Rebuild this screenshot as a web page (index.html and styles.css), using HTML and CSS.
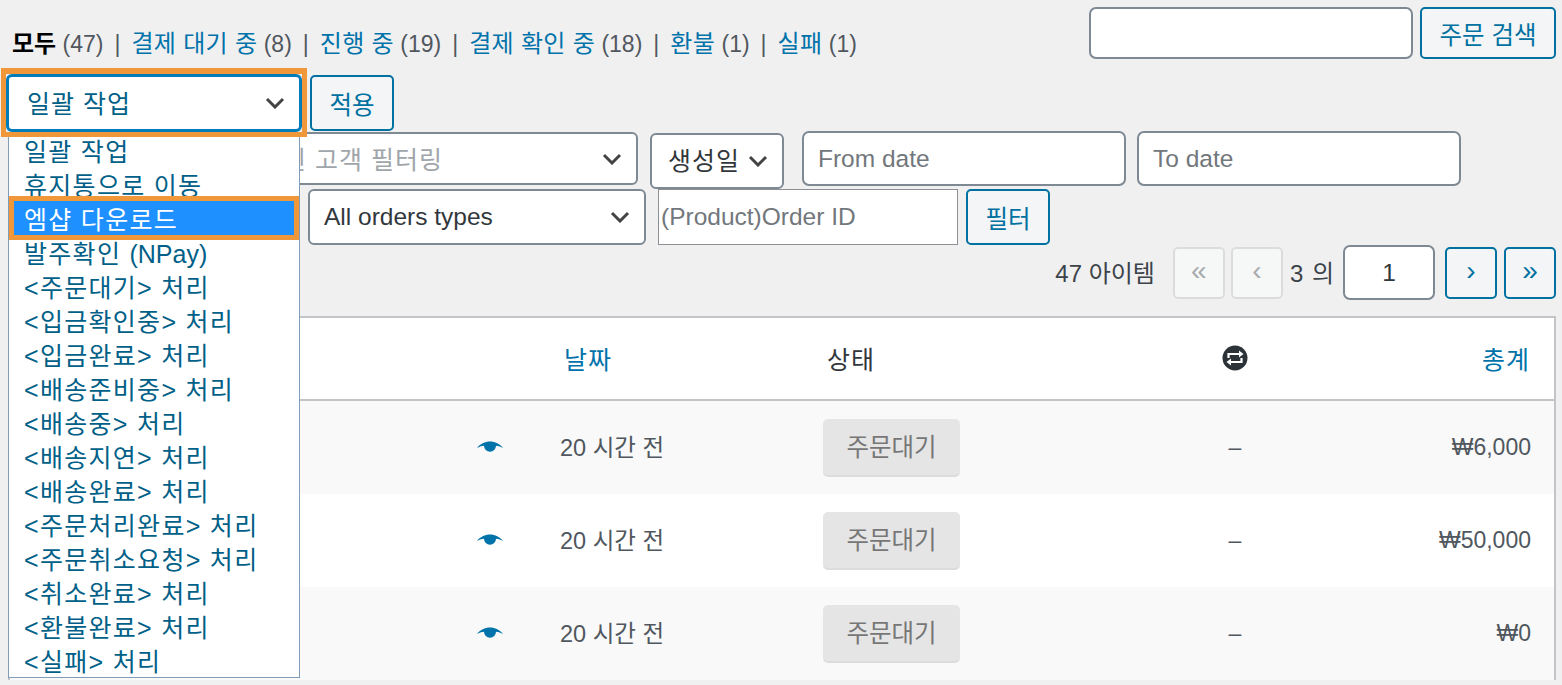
FILE: index.html
```html
<!DOCTYPE html>
<html lang="ko">
<head>
  <meta charset="UTF-8">
  <title>주문</title>
  <link rel="stylesheet" href="styles.css">
</head>
<body>
  <div class="top-row">
    <ul class="status-links">
      <li><b>모두</b> <span class="count">(47)</span><i>|</i></li>
      <li><a href="#">결제 대기 중</a> <span class="count">(8)</span><i>|</i></li>
      <li><a href="#">진행 중</a> <span class="count">(19)</span><i>|</i></li>
      <li><a href="#">결제 확인 중</a> <span class="count">(18)</span><i>|</i></li>
      <li><a href="#">환불</a> <span class="count">(1)</span><i>|</i></li>
      <li><a href="#">실패</a> <span class="count">(1)</span></li>
    </ul>
    <div class="search-box">
      <input class="field search-input" type="text">
      <button class="btn search-btn">주문 검색</button>
    </div>
  </div>

  <div class="bulk-row">
    <div class="bulk-wrap">
      <select class="select bulk-select"><option>일괄 작업</option></select>
      <ul class="bulk-menu">
        <li>일괄 작업</li>
        <li>휴지통으로 이동</li>
        <li class="active">엠샵 다운로드</li>
        <li>발주확인 <span class="latin">(NPay)</span></li>
        <li>&lt;주문대기&gt; 처리</li>
        <li>&lt;입금확인중&gt; 처리</li>
        <li>&lt;입금완료&gt; 처리</li>
        <li>&lt;배송준비중&gt; 처리</li>
        <li>&lt;배송중&gt; 처리</li>
        <li>&lt;배송지연&gt; 처리</li>
        <li>&lt;배송완료&gt; 처리</li>
        <li>&lt;주문처리완료&gt; 처리</li>
        <li>&lt;주문취소요청&gt; 처리</li>
        <li>&lt;취소완료&gt; 처리</li>
        <li>&lt;환불완료&gt; 처리</li>
        <li>&lt;실패&gt; 처리</li>
      </ul>
    </div>
    <button class="btn apply-btn">적용</button>
  </div>

  <div class="filter-row">
    <div class="select customer-select">등록된 고객 필터링</div>
    <select class="select date-select"><option>생성일</option></select>
    <input class="field date-input" type="text" placeholder="From date">
    <input class="field date-input" type="text" placeholder="To date">
  </div>

  <div class="filter-row second">
    <select class="select type-select"><option>All orders types</option></select>
    <input class="order-input" type="text" placeholder="(Product)Order ID">
    <button class="btn filter-btn">필터</button>
  </div>

  <div class="pager">
    <span class="pager-count">47 아이템</span>
    <span class="page-btn off">«</span>
    <span class="page-btn off second-off">‹</span>
    <span class="pager-total">3 의</span>
    <input class="field page-input" type="text" value="1">
    <a class="page-btn" href="#">›</a>
    <a class="page-btn last" href="#">»</a>
  </div>

  <table class="orders">
    <colgroup>
      <col class="col-order"><col class="col-date"><col class="col-status"><col class="col-sync"><col class="col-total">
    </colgroup>
    <thead>
      <tr>
        <th></th>
        <th><a href="#">날짜</a></th>
        <th>상태</th>
        <th class="center">
          <svg class="sync-icon" viewBox="0 0 26 26" width="26" height="26">
            <circle cx="13" cy="13" r="12.5" fill="#2c3338"/>
            <path d="M6.500 13V9H18M19.500 13v4H8" fill="none" stroke="#fff" stroke-width="2.200"/>
            <path d="M17 5.500 21.500 9 17 12.500ZM9 13.500 4.500 17 9 20.500Z" fill="#fff"/>
          </svg>
        </th>
        <th class="right"><a href="#">총계</a></th>
      </tr>
    </thead>
    <tbody>
      <tr>
        <td class="right eye-cell"><svg class="eye" viewBox="0 0 26 14" width="26" height="14"><path d="M0 7C3 3 8 .5 13 .5S23 3 26 7C23 5.500 21 5 19 4.800A6 6 0 1 1 7 4.800C5 5 3 5.500 0 7Z" fill="#0073aa"/></svg></td>
        <td class="date">20 시간 전</td>
        <td><span class="pill">주문대기</span></td>
        <td class="center dash">–</td>
        <td class="right amount">₩6,000</td>
      </tr>
      <tr>
        <td class="right eye-cell"><svg class="eye" viewBox="0 0 26 14" width="26" height="14"><path d="M0 7C3 3 8 .5 13 .5S23 3 26 7C23 5.500 21 5 19 4.800A6 6 0 1 1 7 4.800C5 5 3 5.500 0 7Z" fill="#0073aa"/></svg></td>
        <td class="date">20 시간 전</td>
        <td><span class="pill">주문대기</span></td>
        <td class="center dash">–</td>
        <td class="right amount">₩50,000</td>
      </tr>
      <tr>
        <td class="right eye-cell"><svg class="eye" viewBox="0 0 26 14" width="26" height="14"><path d="M0 7C3 3 8 .5 13 .5S23 3 26 7C23 5.500 21 5 19 4.800A6 6 0 1 1 7 4.800C5 5 3 5.500 0 7Z" fill="#0073aa"/></svg></td>
        <td class="date">20 시간 전</td>
        <td><span class="pill">주문대기</span></td>
        <td class="center dash">–</td>
        <td class="right amount">₩0</td>
      </tr>
    </tbody>
  </table>
</body>
</html>
```

FILE: styles.css
```css
* {
  box-sizing: border-box;
}

html, body {
  height: 685px;
  overflow: hidden;
}

body {
  margin: 0;
  padding: 7px 6px 0 8px;
  background: #f0f0f1;
  color: #3c434a;
  font-family: "Liberation Sans", "Noto Sans CJK KR", sans-serif;
  font-size: 23px;
}

a {
  color: #0073aa;
  text-decoration: none;
}

button, input, select {
  font-family: inherit;
  font-size: 24.5px;
}

/* top row */
.top-row {
  display: flex;
  justify-content: space-between;
  height: 52px;
}

.status-links {
  display: flex;
  list-style: none;
  margin: 22px 0 0 4px;
  padding: 0;
  line-height: 30px;
}

.status-links b {
  color: #000;
  font-size: 24px;
}

.status-links a {
  font-size: 24px;
  letter-spacing: 0.3px;
}

.count {
  color: #50575e;
}

.status-links i {
  font-style: normal;
  color: #50575e;
  margin: 0 11px;
}

.search-box {
  display: flex;
  gap: 7px;
}

.field {
  background: #fff;
  border: 2px solid #7e8993;
  border-radius: 7px;
  color: #32373c;
  padding: 0 14px;
}

.field::placeholder,
.order-input::placeholder {
  color: #72777c;
}

.search-input {
  width: 324px;
}

.btn {
  background: #f3f5f6;
  border: 2px solid #0071a1;
  border-radius: 5px;
  color: #0071a1;
  padding: 0;
}

.search-btn {
  width: 136px;
}

/* bulk actions */
.bulk-row {
  display: flex;
  align-items: flex-start;
  margin-top: 15px;
  height: 57px;
}

.bulk-wrap {
  position: relative;
  margin-left: -2px;
}

/* orange marker drawn over the select and the top of the open list */
.bulk-wrap::after {
  content: "";
  position: absolute;
  z-index: 4;
  top: -6px;
  left: -5px;
  right: -5px;
  bottom: -5px;
  border: 5px solid #f0973a;
  border-top-width: 6px;
  pointer-events: none;
}

.select {
  appearance: none;
  display: block;
  background: #fff url("data:image/svg+xml,%3Csvg xmlns='http://www.w3.org/2000/svg' width='20' height='12'%3E%3Cpath d='M2 2l8 8 8-8' fill='none' stroke='%23444' stroke-width='3'/%3E%3C/svg%3E") no-repeat right 14px center;
  border: 2px solid #7e8993;
  border-radius: 6px;
  color: #32373c;
}

.bulk-select {
  width: 296px;
  height: 58px;
  padding: 2px 18px 0;
  border: 3px solid #007cba;
  color: #016087;
  font-size: 25px;
  letter-spacing: 1px;
  position: relative;
  z-index: 3;
}

.bulk-menu {
  position: absolute;
  z-index: 2;
  top: 58px;
  left: 2px;
  width: 292px;
  margin: 0;
  padding: 0;
  list-style: none;
  background: #fff;
  border: 1px solid #7f9db9;
  color: #016087;
  font-size: 25px;
  letter-spacing: 1.3px;
}

.bulk-menu li {
  height: 34px;
  line-height: 34px;
  padding: 2px 0 0 15px;
  white-space: nowrap;
}

.bulk-menu .latin {
  letter-spacing: 0;
}

.bulk-menu .active {
  background: #1e90ff;
  color: #fff;
  outline: 5px solid #f0973a;
  margin: 0 5px;
  padding-left: 10px;
  position: relative;
}

.apply-btn {
  width: 84px;
  height: 56px;
  margin: 1px 0 0 8px;
}

/* filters */
.filter-row {
  display: flex;
  align-items: flex-start;
  height: 58px;
}

.customer-select {
  width: 518px;
  height: 53px;
  margin: 1px 12px 0 112px;
  padding-left: 113px;
  line-height: 52px;
  color: #a0a5aa;
  font-size: 25px;
  letter-spacing: 1px;
}

.date-select {
  width: 134px;
  height: 56px;
  margin: 2px 18px 0 0;
  padding-left: 16px;
  background-position: right 14px center;
  font-size: 25px;
  letter-spacing: 1px;
}

.date-input {
  width: 324px;
  height: 55px;
  margin-right: 11px;
}

.filter-row.second {
  height: 56px;
}

.type-select {
  width: 338px;
  height: 56px;
  margin: 0 12px 0 300px;
  padding: 0 0 2px 14px;
}

.order-input {
  width: 300px;
  height: 56px;
  margin-right: 8px;
  padding: 0 2px;
  background: #fff;
  border: 1px solid #8c8f94;
  border-radius: 0;
}

.filter-btn {
  width: 84px;
  height: 56px;
}

/* pagination */
.pager {
  display: flex;
  justify-content: flex-end;
  align-items: center;
  height: 55px;
}

.pager-count {
  margin: 0 18px 2px 0;
  font-size: 24px;
}

.page-btn {
  display: flex;
  justify-content: center;
  align-items: center;
  width: 52px;
  height: 52px;
  background: #f3f5f6;
  border: 2px solid #0071a1;
  border-radius: 5px;
  color: #0071a1;
  font-size: 28px;
  padding-bottom: 3px;
}

.page-btn.off {
  background: #f6f7f7;
  border-color: #dcdcde;
  color: #a7aaad;
}

.second-off {
  margin-left: 6px;
}

.pager-total {
  margin: 0 8px 2px 7px;
  font-size: 24px;
  letter-spacing: 1px;
}

.page-input {
  width: 92px;
  height: 55px;
  margin-right: 10px;
  text-align: center;
}

.last {
  margin-left: 7px;
}

/* table */
.orders {
  width: 1548px;
  margin-top: 16px;
  table-layout: fixed;
  border-collapse: separate;
  border-spacing: 0;
  background: #fff;
  border: 2px solid #c3c4c7;
  border-bottom: 0;
}

.col-order { width: 530px; }
.col-date { width: 263px; }
.col-status { width: 327px; }
.col-sync { width: 210px; }

.orders th {
  height: 83px;
  padding: 0 24px 2px;
  border-bottom: 2px solid #c3c4c7;
  font-weight: 400;
  font-size: 25px;
  letter-spacing: 1px;
  color: #32373c;
  text-align: left;
}

.orders th.center { text-align: center; }
.orders th.right { text-align: right; }

.orders td {
  height: 93px;
  padding: 0 20px;
  color: #50575e;
}

.orders tbody tr:nth-child(odd) {
  background: #f9f9f9;
}

.orders td.center { text-align: center; }
.orders td.right { text-align: right; }

.orders td.eye-cell {
  padding: 0 37px 2px 0;
}

.orders td.amount {
  padding-right: 23px;
}

.orders td.date {
  padding-bottom: 4px;
  font-size: 23.5px;
}

.dash {
  color: #999;
}

.sync-icon {
  display: block;
  margin: 0 auto;
}

.eye {
  vertical-align: middle;
}

.pill {
  display: block;
  width: 137px;
  height: 58px;
  line-height: 58px;
  text-align: center;
  background: #e5e5e5;
  border-radius: 5px;
  border-bottom: 2px solid #dcdcdc;
  color: #777;
  font-size: 24.5px;
}
```
